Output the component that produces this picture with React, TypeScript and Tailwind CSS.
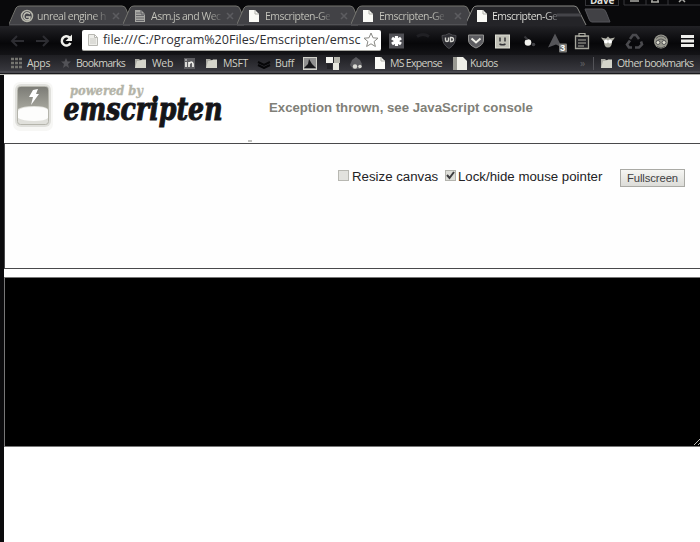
import React from 'react';

const ui = "font-['Open_Sans','Noto_Sans',sans-serif]";

function Page({ grey = false }: { grey?: boolean }) {
  return (
    <svg width="10" height="12" viewBox="0 0 10 12" className="shrink-0">
      <path d="M0 0h6l4 4v8H0z" fill={grey ? '#a8a8a4' : '#fafaf6'} />
      <path d="M6 0v4h4" fill="none" stroke={grey ? '#55555a' : '#b0b0aa'} />
      {grey && <path d="M1 3h4M1 5.5h8M1 8h8M1 10.5h8" stroke="#66666a" />}
    </svg>
  );
}

function Folder() {
  return (
    <svg width="11" height="10" viewBox="0 0 11 10" className="shrink-0">
      <path d="M0 1h4l1 1h6v8H0z" fill="#a9a9a2" />
      <path d="M2 3l4-.5L7 1.500h4V10H0z" fill="#d4d4ca" />
    </svg>
  );
}

function Tab({ title, icon, active = false }: { title: string; icon: React.ReactNode; active?: boolean }) {
  return (
    <div className={`relative shrink-0 h-[21px] ${active ? 'w-[119px]' : 'w-[114px]'}`}>
      <svg className="absolute left-0 top-0" width="125" height="21" viewBox="0 0 125 21">
        <path
          d={active ? 'M-2 21L6 3Q7 1 10 1H107Q110 1 111 4L119 21z' : 'M0 20L7 3Q8 1 11 1H113Q116 1 117 4L123 20z'}
          fill={active ? '#242428' : '#424246'}
        />
        <path
          d={active ? 'M-2 20L6 3Q7 1 10 1H107Q110 1 111 4L119 20' : 'M0 19L7 3Q8 1 11 1H113Q116 1 117 4L123 19'}
          fill="none"
          stroke={active ? '#8a8a86' : '#74746f'}
        />
        {!active && <path d="M0 20H121" stroke="#606064" />}
        {active && <path d="M90 10H114" stroke="#444449" strokeWidth="3" />}
      </svg>
      <div className={`relative flex h-[21px] items-center ${active ? 'pl-[10px]' : 'pl-[12px]'}`}>
        <div className={`flex shrink-0 ${active ? 'w-[15px]' : 'w-[16px]'}`}>{icon}</div>
        <span className="flex w-[68px] shrink-0">
          <span className={`${ui} whitespace-nowrap text-[10.5px] tracking-[-0.5px] leading-[16px] bg-linear-to-r from-[82%] ${active ? 'from-[#e8e8e2] to-[#66666a]' : 'from-[#c6c6bd] to-[#5a5a5c]'} bg-clip-text text-transparent`}>
            {title}
          </span>
        </span>
        {!active && (
          <svg width="8" height="8" className="ml-[7px] shrink-0" viewBox="0 0 8 8">
            <path d="M1 1l6 6M7 1L1 7" stroke="#5c5c60" strokeWidth="1.600" />
          </svg>
        )}
      </div>
    </div>
  );
}

function Cell({ w, children, className = '' }: { w: string; children?: React.ReactNode; className?: string }) {
  return <div className={`flex shrink-0 items-center whitespace-nowrap ${w} ${className}`}>{children}</div>;
}

function TabStrip() {
  return (
    <div className="relative flex h-[26px] items-end overflow-hidden bg-[#09090b] pl-[9px]">
      <Tab
        title="unreal engine h"
        icon={
          <svg width="14" height="14" viewBox="0 0 14 14" className="-ml-[1px] shrink-0">
            <circle cx="7" cy="7" r="5.500" fill="#44444a" stroke="#b5b5aa" strokeWidth="1.500" />
            <path d="M10 5Q6 2 4 6q-1 4 3 5 3 0 3-3H6" fill="none" stroke="#c2c2b6" strokeWidth="1.400" />
          </svg>
        }
      />
      <Tab title="Asm.js and Wec" icon={<Page grey />} />
      <Tab title="Emscripten-Ge" icon={<Page />} />
      <Tab title="Emscripten-Ge" icon={<Page />} />
      <div className="z-10 ml-[2px] mr-[1px]">
        <Tab title="Emscripten-Ge" icon={<Page />} active />
      </div>
      <svg width="30" height="21" className="-ml-[4px] shrink-0" viewBox="0 0 30 21">
        <path d="M2 4H19Q22 4 23 7L27 17H9Q7 17 6 14z" fill="#414145" stroke="#55555a" />
      </svg>
      <div className="absolute right-0 top-0 flex h-[6px] w-[115px]">
        <div className={`${ui} flex h-[6px] w-[34px] justify-center border-x border-b border-[#343438] text-[10px] font-bold leading-[5px] tracking-[-0.2px] text-[#dededa]`}>
          <span className="-mt-[2px]">Dave</span>
        </div>
        <svg width="81" height="6" viewBox="7 0 81 6">
          <path d="M12 0V5H34V0M34 5H56V0M56 5H88" fill="none" stroke="#38383c" />
          <path d="M18 1H27M39 2H47M40 0V2M46 0V2M67 2L73-4M73 2L67-4" stroke="#aaaaa5" strokeWidth="1.500" />
        </svg>
      </div>
    </div>
  );
}

function Toolbar() {
  return (
    <div className="flex h-[29px] items-center bg-linear-to-b from-[#222226] via-[#070709] via-60% to-[#141417] pl-[4px]">
      <Cell w="w-[78px]" className="h-full">
        <svg width="78" height="20" viewBox="0 0 78 20">
          <g fill="none" stroke="#2d2d32" strokeWidth="2">
            <path d="M20 10H8M13 5l-5 5 5 5M32 10H44M39 5l5 5-5 5" />
          </g>
          <path d="M65.500 6.500A4.600 4.600 0 1 0 66.500 12" fill="none" stroke="#f1f1ec" strokeWidth="2.500" />
          <path d="M68 3.500V10H61.500z" fill="#f1f1ec" />
        </svg>
      </Cell>
      <div className="flex h-[21px] w-[299px] shrink-0 items-center overflow-hidden rounded-[2px] border-b border-[#a6a6a0] bg-white pl-[6px]">
        <svg width="10" height="12" viewBox="0 0 10 12" className="shrink-0">
          <path d="M.5.500h6l3 3v8h-9zM6.500.500v3h3" fill="#eeeeea" stroke="#b8b8b3" />
          <path d="M2 5h6M2 7h6M2 9h6" stroke="#cacac5" />
        </svg>
        <span className={`${ui} ml-[5px] w-[260px] whitespace-nowrap text-[12.55px] leading-[20px] text-[#303034]`}>
          file:///C:/Program%20Files/Emscripten/emsc
        </span>
        <svg width="16" height="16" viewBox="0 0 16 16" className="shrink-0">
          <path d="M8 1l2 4.800 5 .4-3.900 3.300 1.300 5L8 11.800 3.600 14.500l1.300-5L1 6.200l5-.4z" fill="#fff" stroke="#888884" />
        </svg>
      </div>
      <svg width="319" height="28" viewBox="381 26.500 319 28" className="shrink-0">
        <rect x="389" y="33" width="15" height="15" fill="#505055" />
        <path d="M396.500 35.500v10M392 37.500l9 6M401 37.500l-9 6" stroke="#fff" strokeWidth="3.200" />
        <path d="M417 36q6-4 12 0" fill="none" stroke="#202024" strokeWidth="3" />
        <path d="M449 33q3 2 7 2 0 9-7 13-7-4-7-13 4 0 7-2z" fill="#2c2c31" stroke="#4c4c50" />
        <path d="M445.500 37v2.500q0 1.500 1.500 1.500t1.500-1.500V37M450.500 37v4h1q2 0 2-2t-2-2z" fill="none" stroke="#d5d5d0" strokeWidth="1.400" />
        <path d="M468.500 34.500h15v5q0 5-7.500 8-7.500-3-7.500-8z" fill="#5c5c60" stroke="#929290" />
        <path d="M471.500 38l4.500 4 4.500-4" fill="none" stroke="#f0f0e9" strokeWidth="2" />
        <rect x="495.500" y="34.500" width="14" height="13" fill="#c0c0b6" stroke="#deded3" />
        <path d="M500 37v4M505 37v4M499.500 43.500q3 1.500 6 0" fill="none" stroke="#333337" strokeWidth="1.500" />
        <circle cx="528" cy="42" r="3.300" fill="#f1f1ed" />
        <circle cx="533.500" cy="44" r="1.800" fill="#424246" />
        <path d="M524.500 36l3 3" stroke="#37373b" strokeWidth="2" />
        <path d="M555 33l7 14-6-3-8 3z" fill="#555559" />
        <rect x="559" y="43" width="8" height="9" rx="1" fill="#777774" />
        <text x="560" y="50.500" fill="#fff" fontFamily="Liberation Sans" fontSize="9.500" fontWeight="700">3</text>
        <path d="M575.500 35.500h13v12.500h-13z" fill="#202024" stroke="#a5a59b" strokeWidth="1.300" />
        <path d="M579 36v-3h6v3zM578 39.500h8M578 42.500h8M578 45.500h6" fill="none" stroke="#aaaaa0" strokeWidth="1.200" />
        <path d="M601 37l5 1 2-2 2 2 5-1-3 4q0 6-4 6t-4-6z" fill="#adada4" />
        <circle cx="606" cy="41" r="2" fill="#fff" />
        <circle cx="610" cy="41" r="2" fill="#fff" />
        <path d="M630 38.500l3-4h3l3 4M641 41l1 3-3 3h-4M632 47h-3l-2-3 3-4" fill="none" stroke="#4a4a4e" strokeWidth="2.600" />
        <circle cx="661" cy="41" r="7" fill="#99998f" />
        <path d="M656 38q5-5 10 0M656 41q5-5 10 0M657 46q4 3 8 0" fill="none" stroke="#5a5a58" />
        <circle cx="658" cy="42" r="2" fill="#ddddcf" stroke="#555557" />
        <circle cx="664" cy="42" r="2" fill="#ddddcf" stroke="#555557" />
        <path d="M681 36h13M681 40.500h13M681 45h13" stroke="#eeeeeb" strokeWidth="3" />
      </svg>
    </div>
  );
}

function Bookmarks() {
  return (
    <div className={`${ui} flex h-[18px] items-center border-b-2 border-[#49494f] bg-linear-to-b from-[#1e1e22] to-[#38383e] pl-[10px] text-[10.5px] tracking-[-0.35px] leading-[16px] text-[#cfcfc5]`}>
      <Cell w="w-[17px]">
        <svg width="12" height="12" viewBox="0 0 12 12"><path d="M1 2h3M5 2h3M9 2h3M1 6h3M5 6h3M9 6h3M1 10h3M5 10h3M9 10h3" stroke="#74746f" strokeWidth="2.500" /></svg>
      </Cell>
      <Cell w="w-[34px]">Apps</Cell>
      <Cell w="w-[15px]">
        <svg width="10" height="10" viewBox="0 0 10 10"><path d="M5 0l1.500 3.500H10L7 6l1 4-3-2-3 2 1-4-3-2.500h3.500z" fill="#525257" /></svg>
      </Cell>
      <Cell w="w-[59px]" className="tracking-[-0.7px]">Bookmarks</Cell>
      <Cell w="w-[17px]"><Folder /></Cell>
      <Cell w="w-[32px]">Web</Cell>
      <Cell w="w-[22px]">
        <svg width="11" height="11" viewBox="0 0 11 11"><rect width="11" height="11" fill="#5d5d61" /><path d="M2 4v5M2 1.500v1M5 9V4M5 6q3-4 4 0v3" fill="none" stroke="#f0f0ec" strokeWidth="1.700" /></svg>
      </Cell>
      <Cell w="w-[17px]"><Folder /></Cell>
      <Cell w="w-[34px]">MSFT</Cell>
      <Cell w="w-[18px]">
        <svg width="14" height="12" viewBox="0 0 14 12"><path d="M1 5l6 3 6-3M1 8l6 3 6-3" fill="none" stroke="#060608" strokeWidth="2" /></svg>
      </Cell>
      <Cell w="w-[28px]">Buff</Cell>
      <Cell w="w-[23px]">
        <svg width="14" height="13" viewBox="0 0 14 13"><rect x=".5" y=".5" width="13" height="12" fill="#909090" stroke="#d2d2ca" /><path d="M6 2l3 5 4 4H1l4-4z" fill="#18181b" /></svg>
      </Cell>
      <Cell w="w-[24px]">
        <svg width="14" height="13" viewBox="0 0 14 13"><path d="M0 0h7v6H0z" fill="#f4f4ef" /><path d="M8 0h6v6H8z" fill="#b5b5ac" /><path d="M7 6h6v7H7z" fill="#e8e8df" /><path d="M1 7h5v5H1z" fill="#232327" /></svg>
      </Cell>
      <Cell w="w-[25px]">
        <svg width="13" height="13" viewBox="0 0 13 13"><path d="M6 0l4 3 2 4-2 5H3L0 8l2-5z" fill="#5a5a5e" /><circle cx="5" cy="9.500" r="2.200" fill="#dadad4" /><circle cx="10" cy="9.500" r="1.800" fill="#dadad4" /></svg>
      </Cell>
      <Cell w="w-[15px]"><Page /></Cell>
      <Cell w="w-[63px]" className="tracking-[-0.7px]">MS Expense</Cell>
      <Cell w="w-[17px]">
        <svg width="14" height="13" viewBox="0 0 14 13"><path d="M0 0h4v13H0z" fill="#999992" /><path d="M4 0h6l4 4v9H4z" fill="#eeeee7" /></svg>
      </Cell>
      <Cell w="w-[110px]" className="tracking-[-0.6px]">Kudos</Cell>
      <Cell w="w-[13px]" className="text-[#606064]">»</Cell>
      <Cell w="w-[8px]"><span className="h-[13px] w-[1px] bg-[#535358]" /></Cell>
      <Cell w="w-[16px]"><Folder /></Cell>
      <Cell w="w-[80px]" className="tracking-[-0.65px]">Other bookmarks</Cell>
    </div>
  );
}

function Logo() {
  return (
    <svg width="250" height="69" viewBox="4 75 250 69" className="shrink-0">
      <defs>
        <linearGradient id="well" x1="0" y1="0" x2="0" y2="1">
          <stop stopColor="#7c7c76" />
          <stop offset="1" stopColor="#a6a69d" />
        </linearGradient>
      </defs>
      <rect x="13" y="82" width="40" height="49" rx="7" fill="#f7f7f5" />
      <rect x="15" y="84" width="36" height="43" rx="6" fill="#e0e0dc" />
      <rect x="17.500" y="86.500" width="31" height="38" rx="3" fill="#e0e0db" stroke="#b5b5ac" />
      <path d="M18 109V89q0-2 2-2h26q2 0 2 2v20q-3-3-14-3t-16 3z" fill="url(#well)" />
      <path d="M18 111q2-4 16-4t14 4v7q-3 3-14 3t-16-3z" fill="#fdfdfc" />
      <path d="M33 90l5-1-2 5h3l-8 11 2-8h-4z" fill="#fff" />
      <text x="70" y="95" textLength="73" lengthAdjust="spacingAndGlyphs" fontFamily="DejaVu Serif, serif" fontWeight="700" fontStyle="italic" fontSize="13.500" fill="#b4b4a8" stroke="#b4b4a8" strokeWidth=".4">powered by</text>
      <text x="63.500" y="120" textLength="159" lengthAdjust="spacingAndGlyphs" fontFamily="DejaVu Serif, serif" fontWeight="700" fontStyle="italic" fontSize="32" fill="#151519" stroke="#151519" strokeWidth="1.100">emscripten</text>
      <path d="M248 141h4" stroke="#85857f" />
    </svg>
  );
}

function Controls() {
  return (
    <div className="flex h-[126px] items-start border border-r-0 border-[#49494b] bg-[#fefefe] pt-[25px] pl-[333px] font-['Liberation_Sans',sans-serif] text-[13.25px] leading-[16px] text-[#222225]">
      <span className="mt-[1px] h-[11px] w-[11px] shrink-0 border border-[#b8b8b2] bg-[#e2e2de]" />
      <span className="ml-[3px] w-[93px] shrink-0 whitespace-nowrap">Resize canvas</span>
      <svg width="11" height="11" viewBox="0 0 11 11" className="mt-[1px] shrink-0">
        <rect x=".5" y=".5" width="10" height="10" fill="#deded9" stroke="#b3b3ad" />
        <path d="M2 5l2.500 3L9 2" fill="none" stroke="#3c3c3f" strokeWidth="2" />
      </svg>
      <span className="ml-[2px] w-[162px] shrink-0 whitespace-nowrap">Lock/hide mouse pointer</span>
      <button className="flex h-[18px] w-[65px] shrink-0 items-center justify-center border border-[#aaaaa5] bg-linear-to-b from-[#f6f6f3] to-[#dcdcd8] text-[11.3px] leading-[16px] tracking-[-0.1px] text-[#3f3f42]">Fullscreen</button>
    </div>
  );
}

export default function App() {
  return (
    <div className="h-[542px] w-[700px] overflow-hidden bg-[#0b0b0d]">
      <TabStrip />
      <Toolbar />
      <Bookmarks />
      <div className="h-[2px] border-b border-[#b5b5b0] bg-[#19191c]" />
      <div className="ml-[4px] h-[467px] bg-white">
        <div className="flex h-[68px]">
          <Logo />
          <div className="ml-[15px] pt-[24px] whitespace-nowrap font-['Liberation_Sans',sans-serif] text-[13.2px] font-bold leading-[17px] text-[#808078]">Exception thrown, see JavaScript console</div>
        </div>
        <Controls />
        <div className="mt-[8px] flex h-[170px] items-end justify-end border-y border-l border-[#777777] bg-black">
          <svg width="7" height="7" viewBox="0 0 7 7"><path d="M1 6l6-6M5 6l2-2" stroke="#bdbdb7" /></svg>
        </div>
      </div>
    </div>
  );
}
